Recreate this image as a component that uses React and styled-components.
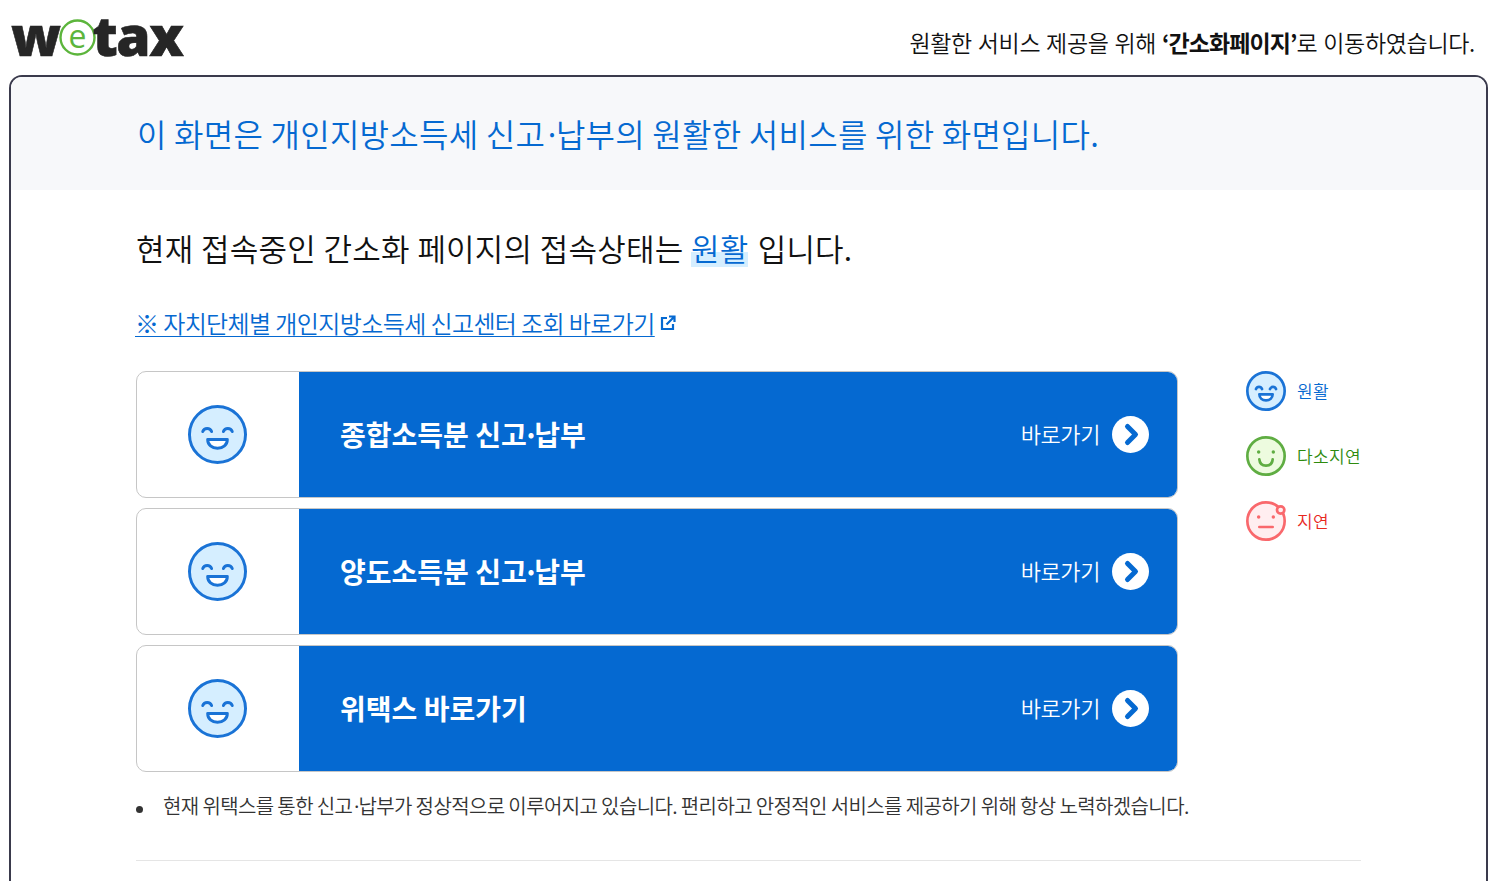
import React from 'react';
import styled, { createGlobalStyle } from 'styled-components';

const GlobalStyle = createGlobalStyle`
   html, body {
      margin: 0;
      padding: 0;
      height: 100%;
      overflow: hidden;
      background: #fff;
      font-family: "Noto Sans CJK KR", "Noto Sans", sans-serif;
   }
   * { box-sizing: border-box; }
`;

const Page = styled.div`
   width: 1495px;
   height: 881px;
   overflow: hidden;
   padding: 0 7px 0 9px;
`;

const Header = styled.header`
   height: 75px;
   display: flex;
   justify-content: space-between;
   padding-right: 13px;
`;

const Logo = styled.div`
   display: flex;
   align-items: flex-start;
   margin-left: 2px;
   padding-top: 3px;
   color: #262626;
   font-family: "Open Sans", sans-serif;
   font-weight: 800;
   font-size: 55px;
   line-height: 64px;
   letter-spacing: -1.5px;
   -webkit-text-stroke: 0.6px #262626;
`;

const LogoRing = styled.svg`
   width: 37px;
   height: 37px;
   margin: 16px -3px 0 -1px;
   flex: none;
`;

const Notice = styled.p`
   margin: 26px 0 0;
   font-size: 23px;
   line-height: 32px;
   letter-spacing: -0.32px;
   word-spacing: 1px;
   color: #111;
   font-weight: 350;
   strong { font-weight: 700; letter-spacing: -0.9px; }
`;

const Panel = styled.main`
   border: 2px solid #3a3a4c;
   border-bottom: 0;
   border-radius: 13px 13px 0 0;
   height: 900px;
   overflow: hidden;
`;

const Banner = styled.div`
   height: 113px;
   padding: 34px 0 0 126px;
   background: #f7f8fa;
   color: #0569d1;
   font-size: 32px;
   line-height: 44px;
   letter-spacing: 0.25px;
   font-weight: 350;
`;

const Body = styled.div`
   padding: 35px 125px 0 125px;
`;

const StatusLine = styled.p`
   margin: 0;
   font-size: 31px;
   line-height: 46px;
   letter-spacing: 0.18px;
   word-spacing: 0.6px;
   color: #111;
   font-weight: 350;
`;

const StatusWord = styled.span`
   color: #0569d1;
   margin-right: 1.5px;
   background: linear-gradient(transparent 60%, #d5eeff 60%, #d5eeff 93%, transparent 93%);
`;

const NarrowDot = styled.span`
   margin-left: -${p => p.$lead}px;
   letter-spacing: -${p => p.$trim}px;
`;

const RegionLink = styled.a`
   display: inline-flex;
   align-items: center;
   gap: 5px;
   margin: 35px 0 0 -1px;
   color: #0569d1;
   font-size: 24px;
   line-height: 34px;
   letter-spacing: -0.6px;
   font-weight: 350;
   span {
      text-decoration: underline;
      text-underline-offset: 3px;
      text-decoration-thickness: 1px;
   }
`;

const Columns = styled.div`
   display: flex;
   margin-top: 31px;
`;

const CardList = styled.div`
   width: 1042px;
   display: grid;
   gap: 10px;
`;

const Card = styled.a`
   display: flex;
   height: 127px;
   border: 1px solid #c6c6c6;
   border-radius: 10px;
   overflow: hidden;
   cursor: pointer;
`;

const FaceCell = styled.div`
   width: 162px;
   flex: none;
   display: flex;
   align-items: center;
   justify-content: center;
   padding: 0 1px 1px 0;
`;

const CardMain = styled.div`
   flex: 1;
   display: flex;
   align-items: center;
   justify-content: space-between;
   padding: 0 28px 0 41px;
   background: #0569d1;
   color: #fff;
`;

const CardTitle = styled.strong`
   margin-bottom: 2px;
   font-size: 28px;
   font-weight: 700;
   letter-spacing: 0;
`;

const CardGo = styled.span`
   display: flex;
   align-items: center;
   gap: 12px;
   font-size: 22px;
   letter-spacing: -0.4px;
   font-weight: 350;
`;

const GoLabel = styled.span`
   margin-bottom: 3px;
`;

const Legend = styled.ul`
   list-style: none;
   margin: 0 0 0 68px;
   padding: 0;
   display: grid;
   gap: 25px;
   align-content: start;
`;

const LegendItem = styled.li`
   display: flex;
   align-items: center;
   gap: 11px;
   height: 40px;
   font-size: 17px;
   letter-spacing: 0.35px;
   font-weight: 350;
   color: ${p => p.$color};
`;

const LegendLabel = styled.span`
   margin-bottom: 2px;
`;

const Bullets = styled.ul`
   list-style: none;
   margin: 20px 0 0;
   padding: 0;
   font-size: 20px;
   line-height: 28px;
   letter-spacing: -0.62px;
   color: #333;
   font-weight: 350;
`;

const Bullet = styled.li`
   display: flex;
   align-items: flex-start;
   gap: 20px;
   &::before {
      content: '';
      flex: none;
      width: 7px;
      height: 7px;
      margin-top: 14px;
      border-radius: 50%;
      background: #333;
   }
`;

const Divider = styled.hr`
   margin: 40px 0 0;
   border: 0;
   border-top: 1px solid #e5e5e5;
`;

const smiles = {
   good: { line: '#1a73d6', fill: '#d5eeff' },
   fair: { line: '#5fad42', fill: '#edfbdf' },
   slow: { line: '#f9686c', fill: '#ffeef0' },
};

const Face = ({ type, size, weight }) => {
   const { line, fill } = smiles[type];
   return (
      <svg width={size} height={size} viewBox="0 0 60 60" fill="none" stroke={line} strokeWidth={weight} strokeLinecap="round">
         <circle cx="30" cy="30" r={30 - weight / 2} fill={fill} />
         {type === 'good' && (
            <>
               <path d="M15 27a4.800 4.800 0 0 1 9 0M36 27a4.800 4.800 0 0 1 9 0" />
               <path d="M20 35h20c0 5.500-4.400 9-10 9s-10-3.500-10-9z" fill="#fff" strokeLinejoin="round" />
            </>
         )}
         {type === 'fair' && (
            <>
               <circle cx="19" cy="24" r="2.600" fill={line} stroke="none" />
               <circle cx="41" cy="24" r="2.600" fill={line} stroke="none" />
               <path d="M20 35c.5 6 4.500 9.500 10 9.500s9.500-3.500 10-9.500" />
            </>
         )}
         {type === 'slow' && (
            <>
               <circle cx="19" cy="24" r="2.600" fill={line} stroke="none" />
               <circle cx="41" cy="24" r="2.600" fill={line} stroke="none" />
               <path d="M20 39h20" />
               <circle cx="52" cy="13.500" r="5.500" fill={fill} />
            </>
         )}
      </svg>
   );
};

const ArrowButton = () => (
   <svg width="37" height="37" viewBox="0 0 37 37">
      <circle cx="18.5" cy="18.500" r="18.500" fill="#fff" />
      <path d="M15.500 10.500l8 8-8 8" fill="none" stroke="#0569d1" strokeWidth="5" strokeLinecap="round" strokeLinejoin="round" />
   </svg>
);

const ExternalIcon = () => (
   <svg width="16" height="16" viewBox="0 0 16 16" fill="none" stroke="#0569d1" strokeWidth="2.200">
      <path d="M7 3H2v11h11V9" />
      <path d="M6.500 9.500L14 2M9 1.500h5.500V7" />
   </svg>
);

const SplitTitle = ({ first, second, trim, lead }) => (
   <>
      {first}<NarrowDot $trim={trim} $lead={lead}>·</NarrowDot>{second}
   </>
);

const cards = [
   <SplitTitle first="종합소득분 신고" second="납부" trim={5} lead={4} />,
   <SplitTitle first="양도소득분 신고" second="납부" trim={5} lead={4} />,
   '위택스 바로가기',
];

const legend = [
   { type: 'good', label: '원활', color: '#0569d1' },
   { type: 'fair', label: '다소지연', color: '#2e8b0e' },
   { type: 'slow', label: '지연', color: '#e8281e' },
];

const App = () => (
   <Page>
      <GlobalStyle />
      <Header>
         <Logo>
            w
            <LogoRing viewBox="0 0 37 37">
               <circle cx="18.500" cy="18.500" r="17" fill="#fff" stroke="#5cb53c" strokeWidth="2.400" />
               <text
                  x="18.500"
                  y="28.500"
                  textAnchor="middle"
                  fontFamily="Open Sans"
                  fontSize="32"
                  fill="#5cb53c"
                  stroke="none"
                  style={{ fontWeight: 400, letterSpacing: 0, WebkitTextStroke: 0 }}
               >
                  e
               </text>
            </LogoRing>
            tax
         </Logo>
         <Notice>원활한 서비스 제공을 위해 <strong>‘간소화페이지’</strong>로 이동하였습니다.</Notice>
      </Header>
      <Panel>
         <Banner>이 화면은 개인지방소득세 <SplitTitle first="신고" second="납부" trim={5} lead={2} />의 원활한 서비스를 위한 화면입니다.</Banner>
         <Body>
            <StatusLine>현재 접속중인 간소화 페이지의 접속상태는 <StatusWord>원활</StatusWord> 입니다.</StatusLine>
            <RegionLink>
               <span>※ 자치단체별 개인지방소득세 신고센터 조회 바로가기</span>
               <ExternalIcon />
            </RegionLink>
            <Columns>
               <CardList>
                  {cards.map((title, index) => (
                     <Card key={index}>
                        <FaceCell><Face type="good" size={59} weight={3} /></FaceCell>
                        <CardMain>
                           <CardTitle>{title}</CardTitle>
                           <CardGo><GoLabel>바로가기</GoLabel> <ArrowButton /></CardGo>
                        </CardMain>
                     </Card>
                  ))}
               </CardList>
               <Legend>
                  {legend.map(item => (
                     <LegendItem key={item.type} $color={item.color}>
                        <Face type={item.type} size={40} weight={4} />
                        <LegendLabel>{item.label}</LegendLabel>
                     </LegendItem>
                  ))}
               </Legend>
            </Columns>
            <Bullets>
               <Bullet>
                  <span>현재 위택스를 통한 <SplitTitle first="신고" second="납부" trim={4} lead={1} />가 정상적으로 이루어지고 있습니다. 편리하고 안정적인 서비스를 제공하기 위해 항상 노력하겠습니다.</span>
               </Bullet>
            </Bullets>
            <Divider />
         </Body>
      </Panel>
   </Page>
);

export default App;
